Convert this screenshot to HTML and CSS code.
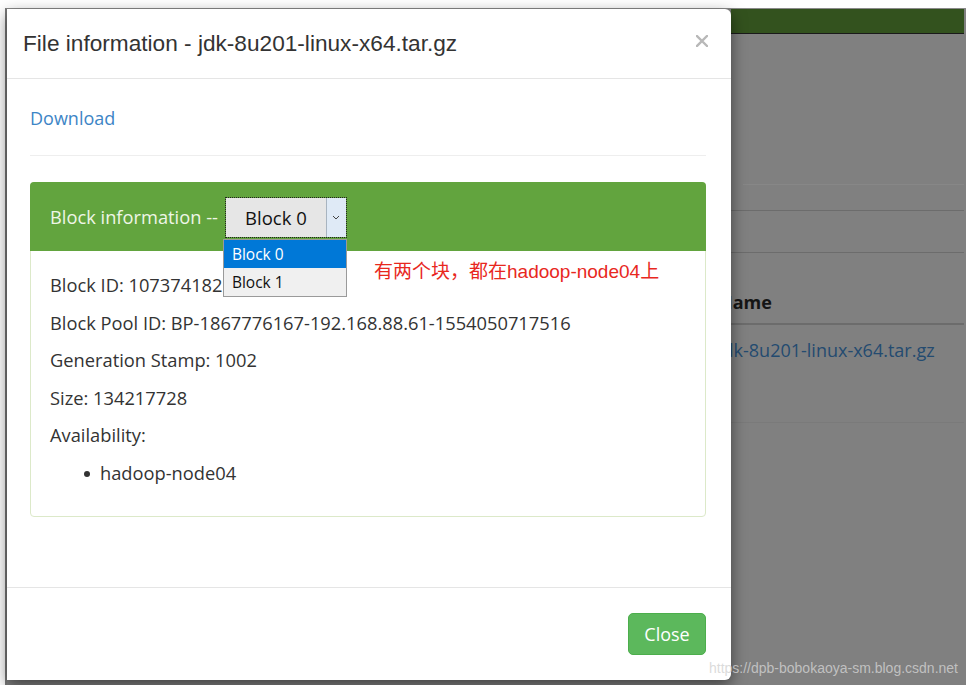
FILE: index.html
```html
<!DOCTYPE html>
<html lang="en">
<head>
<meta charset="utf-8">
<title>File information</title>
<link rel="stylesheet" href="styles.css">
</head>
<body>
<div class="frame">
  <div class="modal">
    <div class="modal-header">
      <h4 class="modal-title">File information - jdk-8u201-linux-x64.tar.gz</h4>
      <svg class="close" width="12" height="12" viewBox="0 0 12 12" aria-label="Close">
        <path d="M1 1 L11 11 M11 1 L1 11" stroke="#b8b8b8" stroke-width="2.4" stroke-linecap="square" fill="none"/>
      </svg>
    </div>
    <div class="modal-body">
      <a class="download" href="#">Download</a>
      <hr class="sep">
      <div class="panel">
        <div class="panel-heading">
          <span class="panel-title">Block information --</span>
          <div class="select-wrap">
            <div class="select">
              <span class="select-value">Block 0</span>
              <span class="select-arrow">
                <svg width="8" height="5" viewBox="0 0 8 5"><path d="M1 1 L4 4 L7 1" stroke="#444" stroke-width="1" fill="none"/></svg>
              </span>
            </div>
            <ul class="dropdown">
              <li class="opt opt-active">Block 0</li>
              <li class="opt">Block 1</li>
            </ul>
          </div>
        </div>
        <div class="panel-body">
          <p>Block ID: 1073741825</p>
          <p>Block Pool ID: BP-1867776167-192.168.88.61-1554050717516</p>
          <p>Generation Stamp: 1002</p>
          <p>Size: 134217728</p>
          <p>Availability:</p>
          <ul class="nodes">
            <li>hadoop-node04</li>
          </ul>
        </div>
        <span class="note">有两个块，都在hadoop-node04上</span>
      </div>
    </div>
    <div class="modal-footer">
      <button class="btn-close" type="button">Close</button>
    </div>
  </div>
  <div class="backdrop-page">
    <div class="navbar"></div>
    <div class="gap-top"></div>
    <div class="line-light"></div>
    <div class="row-a"></div>
    <div class="row-b"></div>
    <div class="th-row"><span class="th">Name</span></div>
    <div class="td-row"><span class="td-link">jdk-8u201-linux-x64.tar.gz</span></div>
  </div>
  <div class="watermark">https://dpb-bobokaoya-sm.blog.csdn.net</div>
</div>
</body>
</html>
```
FILE: styles.css
```css
* { box-sizing: border-box; }
html, body { margin: 0; padding: 0; background: #fff; }
body { font-family: "Open Sans", "Noto Sans", sans-serif; color: #333; }

.frame {
  position: relative;
  margin: 8px 0 0 5px;
  width: 961px;
  height: 677px;
  border-top: 1px solid #8a8a8a;
  border-left: 2px solid #7a7a7a;
  background: #808080;
  display: flex;
  align-items: flex-start;
}

.modal {
  position: relative;
  z-index: 1;
  width: 724px;
  height: 671px;
  flex: none;
  background: #fff;
  border-radius: 0 6px 6px 0;
  box-shadow: 0 5px 15px rgba(0,0,0,0.5);
  display: flex;
  flex-direction: column;
}

.modal-header {
  height: 70px;
  border-bottom: 1px solid #e5e5e5;
  display: flex;
  align-items: center;
  justify-content: space-between;
  padding: 0 23px 1px 16px;
}
.modal-title {
  margin: 0;
  font-family: "Liberation Sans", Arial, sans-serif;
  font-weight: normal;
  font-size: 22.65px;
  line-height: 26px;
  color: #333;
}
.close { margin-top: -4px; }

.modal-body {
  flex: 1;
  padding: 26px 25px 0 23px;
}
.download {
  display: block;
  font-size: 18px;
  line-height: 26px;
  color: #3d85c6;
  text-decoration: none;
}
.sep {
  border: 0;
  border-top: 1px solid #eee;
  margin: 24px 0 26px;
  height: 0;
}

.panel {
  position: relative;
  border: 1px solid #dce9c9;
  border-radius: 4px;
  height: 335px;
}
.panel-heading {
  height: 69px;
  margin: -1px -1px 0;
  background: #62a43e;
  border-radius: 4px 4px 0 0;
  display: flex;
  align-items: center;
  padding-left: 20px;
}
.panel-title {
  font-size: 18.3px;
  line-height: 26px;
  color: #eef6e6;
}
.select-wrap {
  position: relative;
  margin-left: 7px;
  margin-top: 1px;
}
.select {
  width: 122px;
  height: 41px;
  border: 1px dotted #222;
  display: flex;
}
.select-value {
  flex: 1;
  background: #e6e6e6;
  font-size: 18.5px;
  color: #111;
  display: flex;
  align-items: center;
  justify-content: center;
}
.select-arrow {
  width: 20px;
  background: #dfeaf6;
  border-left: 1px solid #a8b4c0;
  display: flex;
  align-items: center;
  justify-content: center;
}
.dropdown {
  position: absolute;
  z-index: 3;
  top: 42px;
  left: -2px;
  width: 124px;
  margin: 0;
  padding: 0;
  list-style: none;
  border: 1px solid #9a9a9a;
  background: #f0f0f0;
}
.opt {
  height: 28px;
  line-height: 28px;
  padding-left: 8px;
  font-size: 15.5px;
  color: #111;
}
.opt-active {
  background: #0078d7;
  color: #fff;
}

.panel-body {
  padding: 21px 19px 0 19px;
}
.panel-body p {
  margin: 0 0 11.6px;
  font-size: 18.3px;
  line-height: 26px;
}
.nodes {
  margin: 0;
  padding-left: 50px;
  list-style: none;
  font-size: 18.3px;
  line-height: 26px;
}
.nodes li {
  position: relative;
}
.nodes li::before {
  content: "";
  position: absolute;
  left: -16px;
  top: 11px;
  width: 6px;
  height: 6px;
  border-radius: 50%;
  background: #333;
}
.note {
  position: absolute;
  left: 343px;
  top: 76px;
  font-family: "Liberation Sans", "Noto Sans CJK SC", sans-serif;
  font-size: 19px;
  line-height: 26px;
  color: #e8281e;
  white-space: nowrap;
}

.modal-footer {
  border-top: 1px solid #e5e5e5;
  padding: 25px 25px;
  display: flex;
  justify-content: flex-end;
}
.btn-close {
  width: 78px;
  height: 42px;
  background: #5cb85c;
  border: 1px solid #4cae4c;
  border-radius: 5px;
  color: #fff;
  font-family: "Open Sans", sans-serif;
  font-size: 18px;
  padding: 0;
}

.backdrop-page {
  flex: 1;
  align-self: stretch;
  padding-right: 2px;
}
.navbar {
  height: 25px;
  background: #33521e;
  border-bottom: 1px solid #1a1a1a;
}
.gap-top { height: 150px; }
.line-light {
  margin-left: 12px;
  border-top: 1px solid #878787;
  height: 26px;
}
.row-a {
  border-top: 1px solid #6c6c6c;
  height: 42px;
}
.row-b {
  border-top: 1px solid #6c6c6c;
}
.th-row {
  height: 72px;
  padding-top: 36px;
  border-bottom: 2px solid #6c6c6c;
  white-space: nowrap;
}
.th {
  display: block;
  margin-left: -13px;
  font-weight: bold;
  font-size: 18px;
  line-height: 26px;
  color: #151515;
}
.td-row {
  height: 98px;
  padding-top: 12px;
  border-bottom: 1px solid #7a7a7a;
  white-space: nowrap;
}
.td-link {
  display: block;
  margin-left: -13px;
  font-size: 18px;
  line-height: 26px;
  color: #244b70;
}

.watermark {
  position: absolute;
  z-index: 2;
  right: 8px;
  bottom: 8px;
  font-family: "Liberation Sans", Arial, sans-serif;
  font-size: 14px;
  line-height: 18px;
  color: rgba(210,210,210,0.8);
  white-space: nowrap;
}
```
